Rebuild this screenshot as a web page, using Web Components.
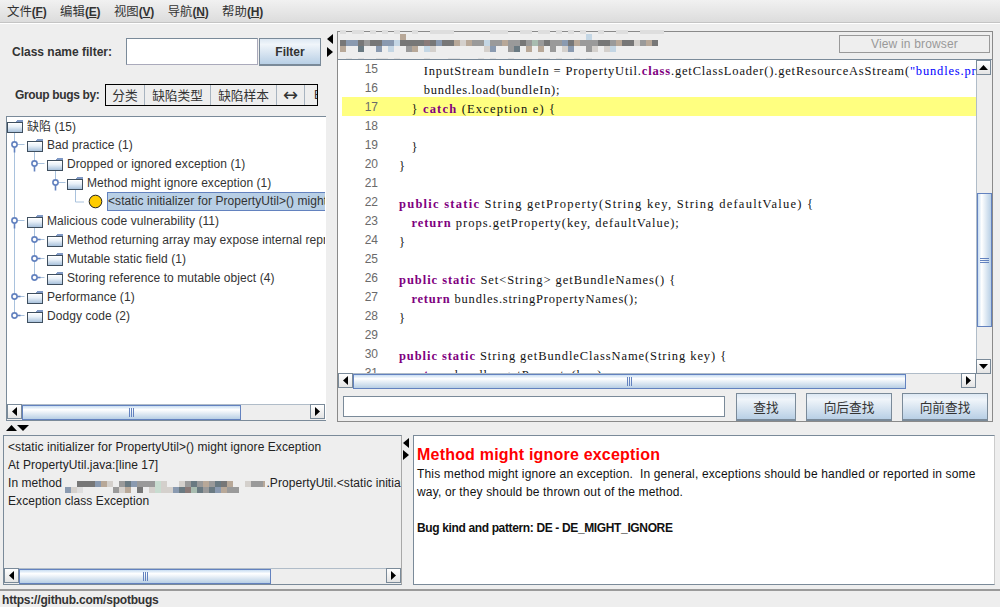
<!DOCTYPE html>
<html lang="zh"><head><meta charset="utf-8"><title>SpotBugs</title>
<style>
html,body{margin:0;padding:0;background:#eee}
body{width:1000px;height:607px;overflow:hidden;font:12px "Liberation Sans","Noto Sans CJK SC",sans-serif;color:#333}
</style></head><body>
<spot-app></spot-app>
<script>
const define=(name,css,render,after)=>{
  customElements.define(name,class extends HTMLElement{
    connectedCallback(){
      if(this.shadowRoot)return;
      const r=this.attachShadow({mode:'open'});
      r.innerHTML=`<style>${css}</style>`+render(this);
      if(after)after(this,r);
    }
  });
};
const A=(e,n,d='')=>e.getAttribute(n)??d;
const CJK='"Noto Sans CJK SC","Liberation Sans",sans-serif';

define('x-arrow',`:host{display:block;line-height:0}svg{display:block}`,e=>{
  const w=+A(e,'w',7),h=+A(e,'h',11),d=A(e,'dir','l');
  const p={l:`${w},0 0,${h/2} ${w},${h}`,r:`0,0 ${w},${h/2} 0,${h}`,u:`${w/2},0 ${w},${h} 0,${h}`,d:`0,0 ${w},0 ${w/2},${h}`}[d];
  return `<svg width="${w}" height="${h}"><polygon points="${p}" fill="#000"/></svg>`;
});

define('x-mosaic',`:host{display:inline-block;vertical-align:top;line-height:0}svg{display:block}`,e=>{
  const pal={l:'#dedede',m:'#777',g:'#9a9a9a',b:'#8a9ab0',t:'#b8a898',w:'#d4d0cc',p:'#c4d6e4',r:'#8a7a78',d:'#6a7a82',s:'#a8bcb0',q:'#c8dcd0',f:'#ececec'};
  const c=+A(e,'cell',6);let y=0,o='';
  A(e,'rows').split('|').forEach(row=>{
    const [h,s]=row.split(':');
    [...s].forEach((k,i)=>{if(pal[k])o+=`<rect x="${i*c}" y="${y}" width="${c}" height="${h}" fill="${pal[k]}"/>`});
    y+=+h;
  });
  return `<svg width="${A(e,'width')}" height="${y}" shape-rendering="crispEdges">${o}</svg>`;
});

define('x-button',`:host{display:flex;align-items:center;justify-content:center;box-sizing:border-box;border:1px solid #7a8a99;border-bottom-width:2px;
  background:linear-gradient(#dde8f3,#f0f5fa 22%,#b8cfe5);color:#333;white-space:nowrap}`,e=>`<slot></slot>`);

define('x-scrollbar',`
  :host{display:flex;box-sizing:border-box;background:#eee;flex:none}
  :host([orient=h]){flex-direction:row;height:16px}
  :host([orient=v]){flex-direction:column;width:16px}
  .btn{flex:none;width:15px;height:15px;display:flex;align-items:center;justify-content:center;border:1px solid #7a8a99;box-sizing:border-box;background:linear-gradient(#fff,#e4e4e4)}
  .track{flex:1;display:flex;min-width:0;min-height:0;border:solid #b0bcc8;border-width:1px 0 0}
  :host([orient=v]) .track{flex-direction:column;border-width:0 0 0 1px}
  .gap{flex:none}
  .thumb{flex:none;box-sizing:border-box;border:1px solid #6382bf;background:linear-gradient(#c8ddf2,#fff 28%,#b8cfe5);display:flex;align-items:center;justify-content:center;gap:1px}
  :host([orient=v]) .thumb{background:linear-gradient(90deg,#c8ddf2,#fff 28%,#b8cfe5);flex-direction:column}
  i{display:block;background:#6382bf;width:1px;height:9px}
  :host([orient=v]) i{width:9px;height:1px}
`,e=>{
  const v=A(e,'orient')==='v',a=+A(e,'lead',0),t=+A(e,'thumb');
  const sz=v?`height:${t}px`:`width:${t}px`,ga=v?`height:${a}px`:`width:${a}px`;
  return `<div class="btn"><x-arrow dir="${v?'u':'l'}" w="${v?9:5}" h="${v?5:9}"></x-arrow></div>
  <div class="track"><div class="gap" style="${ga}"></div><div class="thumb" style="${sz}"><i></i><i></i><i></i></div></div>
  <div class="btn"><x-arrow dir="${v?'d':'r'}" w="${v?9:5}" h="${v?5:9}"></x-arrow></div>`;
});

define('x-menubar',`:host{display:flex;height:23px;box-sizing:border-box;border-bottom:1px solid #c4c4c4;background:linear-gradient(#f1f1f1,#dcdcdc);padding-left:7px;gap:13.6px;align-items:center;flex:none;margin-bottom:1px;box-shadow:0 1px 0 #fff}
 span{font:12.4px ${CJK};color:#333;white-space:nowrap}
 b{font:bold 12px "Liberation Sans",sans-serif;letter-spacing:-.2px}`,
 e=>[['文件','F'],['编辑','E'],['视图','V'],['导航','N'],['帮助','H']].map(([t,k])=>`<span>${t}<b>(<u>${k}</u>)</b></span>`).join(''));

define('folder-icon',`:host{display:block;flex:none;width:17px;height:14px;line-height:0}`,e=>{
  const id='g'+Math.random().toString(36).slice(2);
  return `<svg width="17" height="14" shape-rendering="crispEdges"><defs><linearGradient id="${id}" x1="0" y1="0" x2="0" y2="1"><stop offset="0" stop-color="#fff"/><stop offset=".45" stop-color="#e8f0f8"/><stop offset="1" stop-color="#a9c2dc"/></linearGradient></defs>
  <path d="M9 3 L10 1 H16 V3Z" fill="#7f98c4"/><rect x=".5" y="3.5" width="15" height="9.5" fill="url(#${id})" stroke="#3f4f5f"/><path d="M1 4.5H15" stroke="#fff"/></svg>`;
});

define('tree-row',`
  :host{display:flex;align-items:center;height:19px;position:relative;white-space:nowrap;flex:none;color:#333;font:12px "Liberation Sans","Noto Sans CJK SC",sans-serif;letter-spacing:.07px}
  svg.g{position:absolute;left:0;top:0;pointer-events:none}
  folder-icon{margin-right:3px;position:relative}
  .t{position:relative}
  .bug{flex:none;position:relative;margin-right:4px;margin-left:0;line-height:0}
  .sel{background:#b8cfe5;border:1px solid #6382bf;border-right:0;flex:1;box-sizing:border-box;height:19px;line-height:17px;overflow:hidden;min-width:0}
`,e=>{
  const lv=+A(e,'level',0),c=9.5;
  const list=n=>A(e,n).split(',').filter(Boolean).map(Number);
  let s='';
  const col='#a9c2dd',dk='#6382bf',o=7;
  list('full').forEach(x=>s+=`<path d="M${x+.5-o} 0V19" stroke="${col}"/>`);
  list('top').forEach(x=>s+=`<path d="M${x+.5-o} 0V${c+.5}" stroke="${col}"/>`);
  list('bottom').forEach(x=>s+=`<path d="M${x+.5-o} ${c}V19" stroke="${col}"/>`);
  const h=A(e,'handle');
  if(h){
    const x=+h-o+.5;
    s+=`<path d="M${x} ${c}H${x+10}" stroke="${col}"/>`;
    if(e.hasAttribute('open'))s+=`<path d="M${x} ${c}V${c+8}" stroke="${dk}" stroke-width="1.6"/>`;
    else s+=`<path d="M${x} ${c}H${x+6}" stroke="${dk}" stroke-width="1.6"/>`;
    s+=`<circle cx="${x}" cy="${c}" r="2.6" fill="#fff" stroke="${dk}" stroke-width="1.6"/>`;
  }
  if(A(e,'elbow'))s+=`<path d="M${+A(e,'elbow')+.5-o} ${c+.5}H${+A(e,'elbow')+9-o}" stroke="${col}"/>`;
  const pad=lv*20;
  const leaf=e.hasAttribute('leaf');
  return `<svg class="g" width="320" height="19">${s}</svg><div style="width:${leaf?81:pad}px;flex:none"></div>`+
   (leaf?`<div class="bug"><svg width="15" height="15"><circle cx="7.5" cy="7.5" r="6.3" fill="#ffcc00" stroke="#222" stroke-width="1"/></svg></div><div class="sel"><slot></slot></div>`
        :`<folder-icon></folder-icon><div class="t"><slot></slot></div>`);
});

define('bug-tree',`:host{display:flex;flex-direction:column;flex:none;width:320px;height:305px;margin-left:6px;box-sizing:border-box;border:1px solid #7a8a99;border-right:0;background:#fff;overflow:hidden}
  .v{flex:1;min-height:0;display:flex;flex-direction:column;overflow:hidden;width:318px;margin-top:-1px}
  x-scrollbar{width:318px}`,e=>`<div class="v">
  <tree-row level="0" bottom="14">缺陷 (15)</tree-row>
  <tree-row level="1" handle="14" open full="14" bottom="34">Bad practice (1)</tree-row>
  <tree-row level="2" handle="34" open full="14" top="34" bottom="55">Dropped or ignored exception (1)</tree-row>
  <tree-row level="3" handle="55" open full="14" top="55" bottom="75">Method might ignore exception (1)</tree-row>
  <tree-row leaf full="14" top="75" elbow="75">&lt;static initializer for PropertyUtil&gt;() might ignore Exception</tree-row>
  <tree-row level="1" handle="14" open full="14" bottom="34">Malicious code vulnerability (11)</tree-row>
  <tree-row level="2" handle="34" full="14,34">Method returning array may expose internal representation (6)</tree-row>
  <tree-row level="2" handle="34" full="14,34">Mutable static field (1)</tree-row>
  <tree-row level="2" handle="34" full="14" top="34">Storing reference to mutable object (4)</tree-row>
  <tree-row level="1" handle="14" full="14">Performance (1)</tree-row>
  <tree-row level="1" handle="14" top="14">Dodgy code (2)</tree-row>
  </div><x-scrollbar orient="h" thumb="219"></x-scrollbar>`);

define('filter-bar',`:host{display:block;flex:none}
  .r1{display:flex;margin-top:14px;height:28px}
  label{font:bold 12px "Liberation Sans",sans-serif;color:#333;margin-left:12px;width:114px;flex:none;line-height:28px}
  .in{width:132px;height:27px;flex:none;box-sizing:border-box;background:#fff;border:1px solid #7a8a99;border-right-color:#aab;border-bottom-color:#aab}
  x-button{width:62px;height:28px;margin-left:1px;font:bold 12px "Liberation Sans",sans-serif}
  .r2{display:flex;margin-top:18px;height:22px;align-items:center}
  .r2 label{margin-left:15px;width:90px;line-height:22px;letter-spacing:-.35px}
  .bar{width:213px;height:22px;box-sizing:border-box;border:1px solid #000;display:flex;overflow:hidden;flex:none;background:#eee}
  .bar span{flex:none;box-sizing:border-box;border-right:1px solid #a8b4c0;font:12.7px/20px ${CJK};text-align:center;color:#333}
`,e=>`<div class="r1"><label>Class name filter:</label><div class="in"></div><x-button>Filter</x-button></div>
  <div class="r2"><label>Group bugs by:</label><div class="bar"><span style="width:39px">分类</span><span style="width:66px">缺陷类型</span><span style="width:66px">缺陷样本</span><span style="width:28px;font:18px/19px 'DejaVu Sans',sans-serif">↔</span><span style="width:14px;border:0;text-align:left;padding-left:9px;font:12px/20px 'Liberation Sans'">B</span></div></div>`);

define('code-line',`:host{display:flex;height:19px;flex:none;margin-left:4px;align-items:center;white-space:pre;overflow:hidden}
  :host([hl]){background:#ffff80}
  .n{width:36px;flex:none;text-align:right;font:12px "Liberation Sans",sans-serif;color:#6a6a6a;margin-right:21px;position:relative}
  .c{font:12.5px/19px "Liberation Serif",serif;color:#111;flex:none;position:relative;top:2.5px}
`,e=>`<span class="n">${A(e,'n')}</span><span class="c"><slot></slot></span>`,
(e,r)=>{
  const c=r.querySelector('.c'),n=e.textContent.length,cw=+A(e,'cw',6.2);
  if(!n)return;
  c.style.marginLeft=(+A(e,'indent',0)*6.2)+'px';
  const w=c.getBoundingClientRect().width;
  c.style.letterSpacing=((n*cw-w)/n).toFixed(3)+'px';
});

define('code-view',`:host{display:block;flex:1;min-height:0;overflow:hidden;background:#fff;margin-top:-1px}`,e=>{
  const K=s=>`<b style="color:#800080;font-weight:bold">${s}</b>`;
  const P=K('public')+' '+K('static');
  const L=[
   [15,4,`InputStream bundleIn = PropertyUtil.${K('class')}.getClassLoader().getResourceAsStream(<span style="color:#00f">"bundles.properties"</span>);`,0,6.08],
   [16,4,`bundles.load(bundleIn);`,0,5.93],
   [17,2,`} ${K('catch')} (Exception e) {`,1,6.3],
   [18,0,``],[19,2,`}`],[20,0,`}`],[21,0,``],
   [22,0,`${P} String getProperty(String key, String defaultValue) {`,0,6.2],
   [23,2,`${K('return')} props.getProperty(key, defaultValue);`,0,6.1],
   [24,0,`}`],[25,0,``],
   [26,0,`${P} Set&lt;String&gt; getBundleNames() {`,0,6.3],
   [27,2,`${K('return')} bundles.stringPropertyNames();`,0,6.13],
   [28,0,`}`],[29,0,``],
   [30,0,`${P} String getBundleClassName(String key) {`,0,6.19],
   [31,2,`${K('return')} bundles.getProperty(key);`,0,6.1]];
  return L.map(([n,i,t,h,cw])=>`<code-line n="${n}" indent="${i}" cw="${cw||6.2}"${h?' hl':''}>${t}</code-line>`).join('');
});

define('source-pane',`:host{display:flex;flex-direction:column;flex:none;width:656px;height:391px;margin-top:7px;box-sizing:border-box;border:1px solid #8a8a8a}
  .head{flex:none;height:27px;display:flex;justify-content:space-between;align-items:flex-start;position:relative}
  .hm{position:relative;left:2px;top:-2px;height:29px;overflow:visible}
  .vb{width:151px;height:18px;box-sizing:border-box;border:1px solid #999;color:#999;font:12px/16px "Liberation Sans",sans-serif;text-align:center;margin:3px 2px 0 0;letter-spacing:.17px;flex:none}
  .mid{flex:none;height:329px;display:flex;border-top:1px solid #7a8a99}
  .lc{width:638px;flex:none;display:flex;flex-direction:column;min-height:0;overflow:hidden}
  .rc{width:16px;flex:none;display:flex;flex-direction:column}
  .rc x-scrollbar{height:314px}
  .corner{height:15px;flex:none;background:#eee}
  .find{flex:none;height:32px;display:flex;align-items:flex-start}
  .inp{width:382px;height:21px;box-sizing:border-box;background:#fff;border:1px solid #7a8a99;margin:7px 0 0 5px;flex:none}
  x-button{height:28px;margin-top:4px;font:12.7px ${CJK};flex:none}
`,e=>`<div class="head"><x-mosaic class="hm" width="324" cell="6" rows="4:l.ll.l.l.l..l..llll......lll..ll.ll.l.l.l..l..ll..llll|6:..........t..............................p|6:mbbmgmmbbpmmmmrmbmmtwtggpggtggmgsgmggbmtgggmmgtmmwgtm|6:t..d..b.p..gt.pw........wb..gd.t.t.g.wb..gw.wp|6:...............................................|1:.l.l..ll.l....l...ll...l.l..l....ll.l..l.l"></x-mosaic><div class="vb">View in browser</div></div>
  <div class="mid"><div class="lc"><code-view></code-view><x-scrollbar orient="h" lead="0" thumb="553"></x-scrollbar></div>
  <div class="rc"><x-scrollbar orient="v" lead="118" thumb="134"></x-scrollbar><div class="corner"></div></div></div>
  <div class="find"><div class="inp"></div><x-button style="width:60px;margin-left:11px">查找</x-button><x-button style="width:86px;margin-left:10px">向后查找</x-button><x-button style="width:86px;margin-left:10px">向前查找</x-button></div>`);

define('summary-pane',`:host{display:flex;flex-direction:column;flex:none;width:399px;height:150px;box-sizing:border-box;border:1px solid #7a8a99;border-right-color:#a8a8a8;margin-left:3px}
  .t{flex:1;overflow:hidden;padding:2px 0 0 4px;color:#222;white-space:nowrap;min-height:0;letter-spacing:.07px}
  .t div{height:18px;line-height:18px}
  x-mosaic{margin-top:3px;margin-right:1px}
`,e=>`<div class="t"><div>&lt;static initializer for PropertyUtil&gt;() might ignore Exception</div><div>At PropertyUtil.java:[line 17]</div>
  <div>In method <x-mosaic width="200" cell="6" rows="4:.................................|6:..mmmbtw.gdbgggqw..wgdgtgdmt..wggtq|6:bwl.....gwt.m.wqwwbdrsdgdbtgg.."></x-mosaic>.PropertyUtil.&lt;static initializer for PropertyUtil&gt;()</div><div>Exception class Exception</div></div>
  <x-scrollbar orient="h" thumb="252"></x-scrollbar>`);

define('detail-pane',`:host{display:block;flex:none;width:582px;height:150px;box-sizing:border-box;border:1px solid #7a8a99;border-right-color:#ccc;background:#fff;padding:8px 12px 0 3px;color:#111;overflow:hidden}
  h1{font:bold 16px/21px "Liberation Sans",sans-serif;color:#f00;margin:0;letter-spacing:.2px}
  p{margin:0;line-height:18px;font-size:12px;white-space:pre-wrap;letter-spacing:.155px}
  b{display:block;line-height:18px;margin-top:18px;letter-spacing:-.36px}
`,e=>`<h1>Method might ignore exception</h1><p>This method might ignore an exception.  In general, exceptions should be handled or reported in some way, or they should be thrown out of the method.</p><b>Bug kind and pattern: DE - DE_MIGHT_IGNORE</b>`);

define('status-bar',`:host{display:block;height:18px;box-sizing:border-box;border-top:2px solid #9a9a9a;margin-top:4px;font:bold 12px/18px "Liberation Sans",sans-serif;color:#333;padding-left:2px;flex:none;white-space:nowrap;letter-spacing:-.2px}`,
  e=>`https://github.com/spotbugs`);

define('spot-app',`:host{display:flex;flex-direction:column;width:1000px;height:607px;background:#eee}
  .top{display:flex;height:398px;flex:none}
  .left{width:326px;flex:none;display:flex;flex-direction:column;gap:10px}
  .vdiv{flex:none;display:flex;flex-direction:column;gap:3px;padding:10px 0 0 1px;width:11px;box-sizing:border-box}
  .hdiv{height:13px;flex:none;display:flex;padding:3px 0 0 6px;box-sizing:border-box}
  .bot{display:flex;height:150px;flex:none}
  .bdiv{flex:none;width:11px;display:flex;flex-direction:column;gap:2px;padding:3px 0 0 1px;box-sizing:border-box}
`,e=>`<x-menubar></x-menubar>
  <div class="top"><div class="left"><filter-bar></filter-bar><bug-tree></bug-tree></div>
   <div class="vdiv"><x-arrow dir="l" w="6" h="10"></x-arrow><x-arrow dir="r" w="6" h="10"></x-arrow></div>
   <source-pane></source-pane></div>
  <div class="hdiv"><x-arrow dir="u" w="11" h="6"></x-arrow><x-arrow dir="d" w="12" h="6"></x-arrow></div>
  <div class="bot"><summary-pane></summary-pane>
   <div class="bdiv"><x-arrow dir="l" w="6" h="10"></x-arrow><x-arrow dir="r" w="6" h="10"></x-arrow></div>
   <detail-pane></detail-pane></div>
  <status-bar></status-bar>`);
</script>
</body></html>
